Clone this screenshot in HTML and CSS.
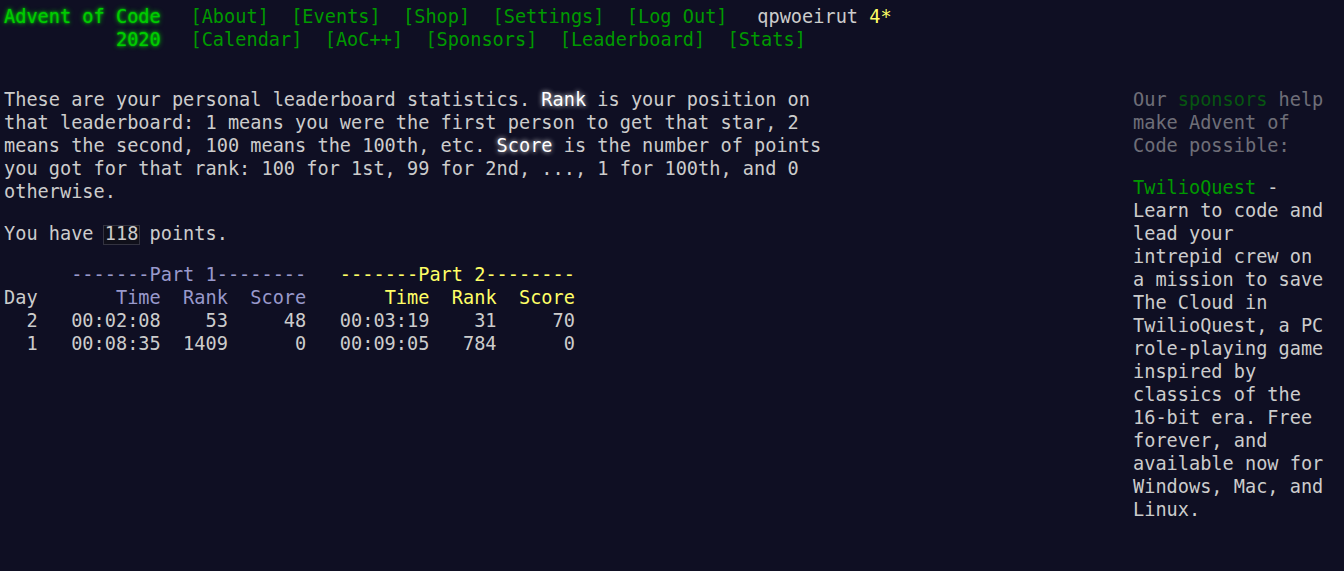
FILE: index.html
```html
<!DOCTYPE html>
<html lang="en">
<head>
<meta charset="utf-8">
<title>Personal Leaderboard Statistics - Advent of Code 2020</title>
<link rel="stylesheet" href="styles.css">
</head>
<body>
<header class="header">
  <div class="header-row">
    <h1 class="title"><a href="#" class="title-link">Advent of Code</a></h1>
    <nav><ul class="nav-list">
      <li><a href="#" class="nav-link">[About]</a></li>
      <li><a href="#" class="nav-link">[Events]</a></li>
      <li><a href="#" class="nav-link">[Shop]</a></li>
      <li><a href="#" class="nav-link">[Settings]</a></li>
      <li><a href="#" class="nav-link">[Log Out]</a></li>
    </ul></nav>
    <div class="user">qpwoeirut <span class="star-count">4*</span></div>
  </div>
  <div class="header-row">
    <h1 class="title"><a href="#" class="title-link">2020</a></h1>
    <nav><ul class="nav-list">
      <li><a href="#" class="nav-link">[Calendar]</a></li>
      <li><a href="#" class="nav-link">[AoC++]</a></li>
      <li><a href="#" class="nav-link">[Sponsors]</a></li>
      <li><a href="#" class="nav-link">[Leaderboard]</a></li>
      <li><a href="#" class="nav-link">[Stats]</a></li>
    </ul></nav>
  </div>
</header>
<div class="layout">
  <main class="article">
    <p class="para">These are your personal leaderboard statistics. <em class="glow">Rank</em> is your position on that leaderboard: 1 means you were the first person to get that star, 2 means the second, 100 means the 100th, etc. <em class="glow">Score</em> is the number of points you got for that rank: 100 for 1st, 99 for 2nd, ..., 1 for 100th, and 0 otherwise.</p>
    <p class="para">You have <code class="code">118</code> points.</p>
<pre class="stats">      <span class="first">-------Part 1--------</span>   <span class="both">-------Part 2--------</span>
Day       <span class="first">Time  Rank  Score</span>       <span class="both">Time  Rank  Score</span>
  2   00:02:08    53     48   00:03:19    31     70
  1   00:08:35  1409      0   00:09:05   784      0
</pre>
  </main>
  <aside class="sidebar">
    <p class="para quiet">Our <a href="#" class="nav-link">sponsors</a> help make Advent of Code possible:</p>
    <p class="para"><a href="#" class="nav-link">TwilioQuest</a> - Learn to code and lead your intrepid crew on a mission to save The Cloud in TwilioQuest, a PC role-playing game inspired by classics of the 16-bit era. Free forever, and available now for Windows, Mac, and Linux.</p>
  </aside>
</div>
</body>
</html>
```
FILE: styles.css
```css
html, body {
  background: #0f0f23;
}
body {
  margin: 0;
  padding: 4.5px 11px 0 4px;
  color: #cccccc;
  font-family: "DejaVu Sans Mono", "Liberation Mono", monospace;
  font-size: 18.6px;
  line-height: 23px;
}
a {
  text-decoration: none;
}
.header {
  white-space: nowrap;
  margin-bottom: 37.5px;
}
.header-row {
  display: flex;
  align-items: baseline;
}
.title {
  margin: 0;
  font-size: 1em;
  font-weight: normal;
  width: 14ch;
  padding-right: 1em;
  text-align: right;
}
.title-link {
  color: #00cc00;
  text-shadow: 0 0 2px #00cc00, 0 0 5px #00cc00;
}
.nav-list {
  list-style: none;
  margin: 0;
  padding: 0;
  display: flex;
}
.nav-list li {
  padding: 0 0.6em;
}
.nav-link {
  color: #009900;
}
.user {
  margin-left: 1em;
}
.star-count {
  color: #ffff66;
}
.layout {
  display: flex;
  align-items: flex-start;
}
.article {
  flex: 1;
  min-width: 0;
}
.article .para {
  width: 45em;
}
.para {
  margin: 0 0 1em;
}
.glow {
  font-style: normal;
  color: #ffffff;
  text-shadow: 0 0 5px #ffffff;
}
.code {
  position: relative;
  display: inline-block;
  font-family: inherit;
  font-size: 1em;
  margin: 0;
  padding: 0;
  z-index: 0;
}
.code::before {
  content: "";
  position: absolute;
  z-index: -1;
  left: -2px;
  right: -2px;
  top: 3px;
  bottom: 0;
  border: 1px solid #333340;
  background: #10101a;
}
.stats {
  margin: 0;
  font-family: inherit;
  font-size: 1em;
  line-height: 23px;
}
.first {
  color: #9999cc;
}
.both {
  color: #ffff66;
}
.sidebar {
  width: 200px;
  flex: none;
  margin-left: 1em;
}
.quiet {
  opacity: 0.5;
}
```
